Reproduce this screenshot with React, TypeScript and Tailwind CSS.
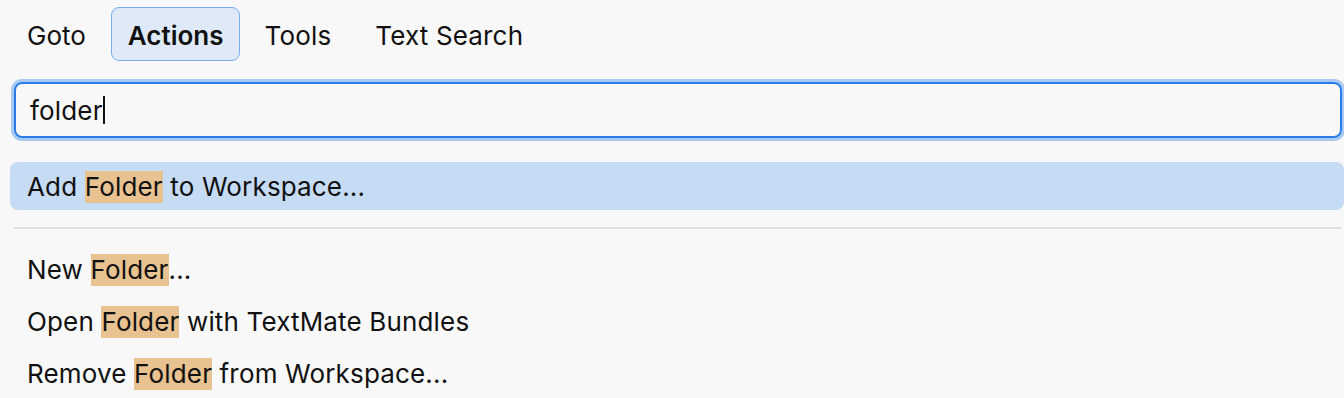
import React from "react";

const Hl = ({ children }: { children: React.ReactNode }) => (
  <span className="bg-[#e8c290] inline-block leading-[32px] h-[32px]">{children}</span>
);

export default function App() {
  const base = "h-[54px] pt-[2px] flex items-center rounded-[8px] border text-[26px]";
  return (
    <div
      className="w-[1344px] h-[398px] bg-[#f8f8f8] overflow-hidden text-[#111111] tracking-[0.01em]"
      style={{ fontFamily: "Inter, 'Noto Sans', sans-serif" }}
    >
      <div className="flex gap-[8px] pt-[7px] pl-[10px]">
        <div className={`${base} px-[16px] border-transparent tracking-normal`}>Goto</div>
        <div className={`${base} pl-[16px] pr-[15px] border-[#78aef0] bg-[#dfe9f7] font-semibold tracking-normal`}>
          Actions
        </div>
        <div className={`${base} px-[16px] border-transparent`}>Tools</div>
        <div className={`${base} px-[16px] ml-[2px] border-transparent`}>Text Search</div>
      </div>
      <div className="mt-[21px] ml-[14px] mr-[2px] h-[56px] rounded-[8px] border-2 border-[#2a7de8] ring-[3px] ring-[#a9c9f2] flex items-center pl-[14px] text-[26px]">
        <span>folder</span>
        <span className="w-[2px] h-[28px] bg-[#111111]" />
      </div>
      <div className="mt-[24px] ml-[10px] h-[48px] rounded-[8px] bg-[#c6dbf4] flex items-center pl-[17px] text-[26px]">
        <span>
          Add <Hl>Folder</Hl> to Workspace...
        </span>
      </div>
      <div className="mt-[17px] ml-[14px] mr-[3px] h-[2px] bg-[#e0e0e0]" />
      <div className="mt-[14px] flex flex-col text-[26px]">
        <div className="h-[52px] flex items-center pl-[27px]">
          <span>
            New <Hl>Folder</Hl>...
          </span>
        </div>
        <div className="h-[52px] flex items-center pl-[27px]">
          <span>
            Open <Hl>Folder</Hl> with TextMate Bundles
          </span>
        </div>
        <div className="h-[52px] flex items-center pl-[27px]">
          <span>
            Remove <Hl>Folder</Hl> from Workspace...
          </span>
        </div>
      </div>
    </div>
  );
}
